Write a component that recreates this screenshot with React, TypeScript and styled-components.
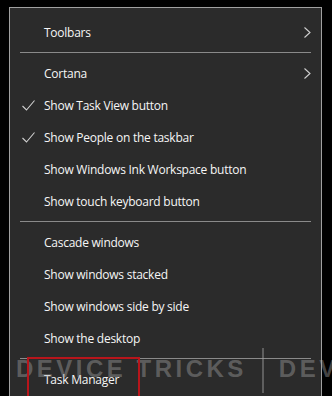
import React from "react";
import styled, { createGlobalStyle } from "styled-components";

const GlobalStyle = createGlobalStyle`
  html, body {
    margin: 0;
    padding: 0;
    background: #000;
    overflow: hidden;
  }
  body {
    font-family: "Open Sans", "Noto Sans", sans-serif;
  }
`;

const Screen = styled.div`
  position: relative;
  width: 332px;
  height: 396px;
  overflow: hidden;
  background: #000;
  padding: 7px 0 0 9px;
  box-sizing: border-box;
`;

const Menu = styled.div`
  width: 313px;
  height: 400px;
  box-sizing: border-box;
  border: 1px solid #a0a0a0;
  background: #2b2b2b;
  padding-top: 8px;
  display: flex;
  flex-direction: column;
`;

const Item = styled.div`
  position: relative;
  height: 32px;
  display: flex;
  align-items: center;
  padding-left: 34px;
  color: #f6f6f6;
  font-size: 12px;
  letter-spacing: -0.25px;
`;

const Check = styled.svg`
  position: absolute;
  left: 12px;
  top: 11px;
`;

const Chevron = styled.svg`
  position: absolute;
  right: 10px;
  top: 11px;
`;

const Separator = styled.div`
  height: 1px;
  margin: 4px 10px;
  background: #8a8a8a;
`;

const Watermark = styled.div`
  position: absolute;
  left: 16px;
  top: 348px;
  height: 45px;
  display: flex;
  align-items: center;
  gap: 15px;
  font-family: "Liberation Sans", Arial, sans-serif;
  font-weight: bold;
  font-size: 24px;
  letter-spacing: 3.5px;
  color: rgba(165, 165, 165, 0.42);
  pointer-events: none;
  white-space: nowrap;
`;

const Word = styled.span`
  margin-top: -3px;
`;

const Bar = styled.div`
  width: 2px;
  align-self: stretch;
  background: rgba(165, 165, 165, 0.42);
`;

const Highlight = styled.div`
  position: absolute;
  left: 27px;
  top: 357px;
  width: 113px;
  height: 50px;
  border: 2px solid #b8151b;
  box-sizing: border-box;
`;

type Entry =
  | { kind: "item"; label: string; checked?: boolean; sub?: boolean }
  | { kind: "sep" };

const entries: Entry[] = [
  { kind: "item", label: "Toolbars", sub: true },
  { kind: "sep" },
  { kind: "item", label: "Cortana", sub: true },
  { kind: "item", label: "Show Task View button", checked: true },
  { kind: "item", label: "Show People on the taskbar", checked: true },
  { kind: "item", label: "Show Windows Ink Workspace button" },
  { kind: "item", label: "Show touch keyboard button" },
  { kind: "sep" },
  { kind: "item", label: "Cascade windows" },
  { kind: "item", label: "Show windows stacked" },
  { kind: "item", label: "Show windows side by side" },
  { kind: "item", label: "Show the desktop" },
  { kind: "sep" },
  { kind: "item", label: "Task Manager" },
];

const App = () => {
  return (
    <Screen>
      <GlobalStyle />
      <Menu>
        {entries.map((e, i) =>
          e.kind === "sep" ? (
            <Separator key={i} />
          ) : (
            <Item key={i}>
              {e.checked && (
                <Check width="13" height="11" viewBox="0 0 13 11">
                  <path d="M0.5 6 L4.5 10 L12.5 0.5" fill="none" stroke="#d0d0d0" strokeWidth="1.1" />
                </Check>
              )}
              {e.label}
              {e.sub && (
                <Chevron width="7" height="11" viewBox="0 0 7 11">
                  <path d="M0.5 0.5 L6 5.5 L0.5 10.5" fill="none" stroke="#d0d0d0" strokeWidth="1.1" />
                </Chevron>
              )}
            </Item>
          )
        )}
      </Menu>
      <Watermark>
        <Word>DEVICE TRICKS</Word>
        <Bar />
        <Word>DEV</Word>
      </Watermark>
      <Highlight />
    </Screen>
  );
};

export default App;
